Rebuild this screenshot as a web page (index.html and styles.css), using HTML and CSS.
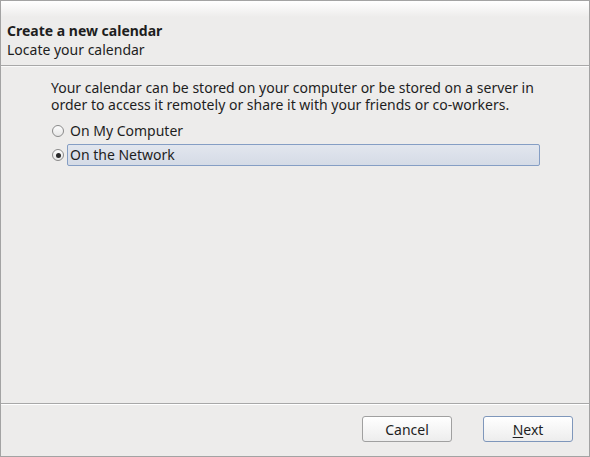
FILE: index.html
```html
<!DOCTYPE html>
<html lang="en">
<head>
    <meta charset="UTF-8">
    <title>Create a new calendar</title>
    <link rel="stylesheet" href="styles.css">
</head>
<body>

<div class="wizard">
    <div class="header">
        <div class="title">Create a new calendar</div>
        <div class="subtitle">Locate your calendar</div>
    </div>

    <div class="content">
        <p class="intro">Your calendar can be stored on your computer or be stored on a server in order to access it remotely or share it with your friends or co-workers.</p>

        <label class="option">
            <span class="radio"></span>
            <span class="option-label">On My Computer</span>
        </label>
        <label class="option">
            <span class="radio checked"></span>
            <span class="option-label selected">On the Network</span>
        </label>
    </div>

    <div class="footer">
        <button class="btn">Cancel</button>
        <button class="btn default"><u>N</u>ext</button>
    </div>
</div>

</body>
</html>
```

FILE: styles.css
```css
body {
    margin: 0;
    font-family: 'Noto Sans', 'DejaVu Sans', sans-serif;
    font-size: 14px;
    color: #1e1e1e;
    background-color: #edeceb;
}
.wizard {
    width: 590px;
    height: 457px;
    box-sizing: border-box;
    border: 1px solid #a3a3a3;
    display: flex;
    flex-direction: column;
    background-color: #edeceb;
}
.header {
    height: 65px;
    box-sizing: border-box;
    padding: 20px 0 0 6px;
    background: linear-gradient(#ffffff 0, #edeceb 16px);
    border-bottom: 1px solid #a8a8a8;
    line-height: 19px;
}
.title {
    font-weight: bold;
}
.content {
    flex: 1;
    padding: 12px 0 0 50px;
    border-top: 1px solid #fafafa;
}
.intro {
    margin: 0 0 6px 0;
    width: 500px;
    line-height: 17px;
}
.option {
    display: flex;
    align-items: center;
    height: 24px;
}
.radio {
    width: 10px;
    height: 10px;
    border: 1px solid #8a8a8a;
    border-radius: 50%;
    background: linear-gradient(#fdfdfd, #e6e6e6);
    margin: 0 6px 0 1px;
    position: relative;
    flex-shrink: 0;
}
.radio.checked::after {
    content: '';
    position: absolute;
    left: 2.5px;
    top: 2.5px;
    width: 5px;
    height: 5px;
    border-radius: 50%;
    background: #2a2a2a;
}
.option-label {
    margin-left: -3px;
    padding: 0 2px;
    height: 20px;
    line-height: 20px;
    border: 1px solid transparent;
}
.option-label.selected {
    width: 467px;
    border-color: #859ec4;
    border-radius: 2px;
    background: linear-gradient(#e2e6ee, #d5dbe6);
}
.footer {
    height: 53px;
    border-top: 1px solid #a8a8a8;
    box-shadow: inset 0 1px 0 #ffffff;
    display: flex;
    justify-content: flex-end;
    align-items: flex-start;
    gap: 31px;
    padding: 12px 16px 0 0;
    box-sizing: border-box;
}
.btn {
    width: 90px;
    height: 26px;
    font-family: inherit;
    font-size: 14px;
    color: #1e1e1e;
    border: 1px solid #a0a0a0;
    border-radius: 3px;
    background: linear-gradient(#ffffff, #ededed);
    padding: 0;
}
.btn.default {
    border-color: #7f97bb;
}
.btn u {
    text-decoration-thickness: 1px;
    text-underline-offset: 2px;
}
```
